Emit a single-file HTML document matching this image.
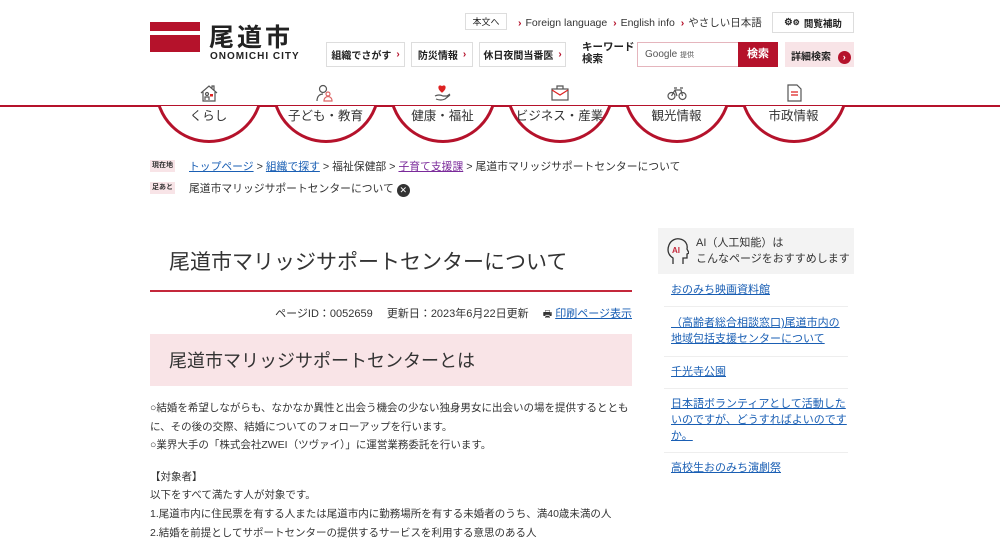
<!DOCTYPE html>
<html><head><meta charset="utf-8"><style>
*{margin:0;padding:0;box-sizing:border-box}
body{width:1000px;height:540px;overflow:hidden;background:#fff;font-family:"Liberation Sans","Noto Sans CJK JP",sans-serif;color:#333;position:relative}
.a{position:absolute;white-space:nowrap}
.btn{position:absolute;border:1px solid #ddd;background:#fff;font-size:10px;font-weight:bold;display:flex;align-items:center;justify-content:center;color:#222}
.chev{color:#b5122b;font-weight:bold;margin-right:4px}
.navline{position:absolute;left:0;top:105px;width:1000px;height:2px;background:#b5122b}
.arcs{position:absolute;left:0;top:106px;width:1000px;height:50px;overflow:hidden}
.circ{position:absolute;width:108px;height:108px;border-radius:50%;border:3px solid #b5122b;background:#fff;top:-71px}
.nl{position:absolute;top:105px;font-size:12.5px;color:#333;width:117px;text-align:center}
.ic{position:absolute;top:84px;width:20px;height:18px}
a,.lk{color:#1a5fb4;text-decoration:underline}
.body p{font-size:10.5px;line-height:18.6px;color:#333}
.side a{position:absolute;left:671px;font-size:11px;line-height:16px;color:#1a5fb4}
.sep{position:absolute;left:664px;width:184px;height:1px;background:#eee}
</style></head><body>
<div class="a" style="left:150px;top:22px;width:50px;height:9px;background:#b5122b"></div>
<div class="a" style="left:150px;top:35px;width:50px;height:17px;background:#b5122b"></div>
<div class="a" style="left:209px;top:18px;font-size:25px;font-weight:bold;letter-spacing:3px;color:#222">尾道市</div>
<div class="a" style="left:210px;top:51px;font-size:10px;font-weight:bold;letter-spacing:1px;color:#222">ONOMICHI CITY</div>
<div class="btn" style="left:465px;top:13px;width:42px;height:17px;font-weight:normal;font-size:9px">本文へ</div>
<div class="a" style="left:518px;top:15px;font-size:10.5px;color:#333"><span class="chev">›</span>Foreign language &nbsp;<span class="chev">›</span>English info &nbsp;<span class="chev">›</span>やさしい日本語</div>
<div class="btn" style="left:772px;top:12px;width:82px;height:21px;font-size:9.5px">⚙<span style="font-size:8px;margin-right:4px">⚙</span>閲覧補助</div>
<div class="btn" style="left:326px;top:42px;width:79px;height:25px">組織でさがす <span class="chev" style="margin:0 0 0 5px">›</span></div>
<div class="btn" style="left:411px;top:42px;width:62px;height:25px">防災情報 <span class="chev" style="margin:0 0 0 5px">›</span></div>
<div class="btn" style="left:479px;top:42px;width:87px;height:25px">休日夜間当番医 <span class="chev" style="margin:0 0 0 5px">›</span></div>
<div class="a" style="left:582px;top:41px;font-size:10.5px;font-weight:bold;line-height:12px;color:#222">キーワード<br>検索</div>
<div class="a" style="left:637px;top:42px;width:102px;height:25px;border:1px solid #e5b5bd;font-size:10px;color:#555;padding:6px 0 0 7px">Google <span style="font-size:7px">提供</span></div>
<div class="a" style="left:738px;top:42px;width:40px;height:25px;background:#b5122b;color:#fff;font-size:11px;font-weight:bold;text-align:center;line-height:25px">検索</div>
<div class="a" style="left:785px;top:42px;width:69px;height:25px;background:#f8e4e7;font-size:10px;font-weight:bold;color:#222;padding:6px 0 0 6px">詳細検索 <span style="display:inline-block;width:13px;height:13px;border-radius:50%;background:#b5122b;color:#fff;font-size:9px;text-align:center;line-height:13px;margin-left:4px">›</span></div>
<div class="navline"></div>
<div class="arcs">
<div class="circ" style="left:155px"></div><div class="circ" style="left:272px"></div><div class="circ" style="left:389px"></div><div class="circ" style="left:506px"></div><div class="circ" style="left:623px"></div><div class="circ" style="left:740px"></div>
</div>
<svg class="ic" style="left:199px" viewBox="0 0 20 18" fill="none" stroke="#555" stroke-width="1.2"><path d="M2 9L10 2l8 7M4 8v9h12V8M13 4V2h2v4"/><circle cx="8" cy="10" r="1.5"/><path d="M6 16v-3h4v3"/><rect x="11" y="10" width="3" height="2.5" fill="#d22" stroke="none"/></svg>
<svg class="ic" style="left:315px" viewBox="0 0 20 18" fill="none" stroke="#555" stroke-width="1.2"><circle cx="8" cy="5" r="3.5"/><path d="M2 17c0-5 3-7 6-7"/><circle cx="13" cy="10" r="2" stroke="#d66"/><path d="M9 17c0-3 2-4.5 4-4.5s4 1.5 4 4.5z" stroke="#d66"/></svg>
<svg class="ic" style="left:432px" viewBox="0 0 20 18" fill="none" stroke="#555" stroke-width="1.2"><path d="M10 8C5 4 7 0 10 3 13 0 15 4 10 8z" fill="#d22" stroke="#d22"/><path d="M3 12q4-2 8 0h4l3-2M4 15q5 2 9 0l5-4"/></svg>
<svg class="ic" style="left:550px" viewBox="0 0 20 18" fill="none" stroke="#555" stroke-width="1.2"><rect x="2" y="5" width="16" height="11"/><path d="M7 5V2h6v3"/><path d="M2 6l8 5 8-5" stroke="#d22"/></svg>
<svg class="ic" style="left:667px" viewBox="0 0 20 18" fill="none" stroke="#555" stroke-width="1.2"><circle cx="4.5" cy="12" r="3.5"/><circle cx="15.5" cy="12" r="3.5"/><path d="M4.5 12L8 6h6l1.5 6M10 12L8 6M7 4h3M13 4h3" /></svg>
<svg class="ic" style="left:784px" viewBox="0 0 20 18" fill="none" stroke="#555" stroke-width="1.2"><path d="M4 1h9l4 4v12H4z"/><path d="M7 8h7M7 11h7" stroke="#d22"/></svg>
<div class="nl" style="left:150px">くらし</div>
<div class="nl" style="left:267px">子ども・教育</div>
<div class="nl" style="left:384px">健康・福祉</div>
<div class="nl" style="left:501px">ビジネス・産業</div>
<div class="nl" style="left:618px">観光情報</div>
<div class="nl" style="left:735px">市政情報</div>
<div class="a" style="left:150px;top:160px;width:25px;height:12px;background:#f8e4e7;font-size:7px;font-weight:bold;text-align:center;line-height:12px">現在地</div>
<div class="a" style="left:189px;top:158px;font-size:10.8px;color:#333"><span class="lk">トップページ</span> &gt; <span class="lk">組織で探す</span> &gt; 福祉保健部 &gt; <span class="lk" style="color:#7a2a9a">子育て支援課</span> &gt; 尾道市マリッジサポートセンターについて</div>
<div class="a" style="left:150px;top:182px;width:25px;height:12px;background:#f8e4e7;font-size:7px;font-weight:bold;text-align:center;line-height:12px">足あと</div>
<div class="a" style="left:189px;top:180px;font-size:10.8px;color:#333">尾道市マリッジサポートセンターについて <span style="display:inline-block;width:13px;height:13px;border-radius:50%;background:#333;color:#fff;font-size:9px;text-align:center;line-height:13px;vertical-align:-1px">✕</span></div>
<div class="a" style="left:169px;top:246px;font-size:21px;color:#333">尾道市マリッジサポートセンターについて</div>
<div class="a" style="left:150px;top:290px;width:482px;height:2px;background:#c4283b"></div>
<div class="a" style="right:368px;top:305px;font-size:11px;color:#333">ページID：0052659　 更新日：2023年6月22日更新　 <span style="font-size:10px">🖶</span> <span class="lk">印刷ページ表示</span></div>
<div class="a" style="left:150px;top:334px;width:482px;height:52px;background:#f9e4e7"></div>
<div class="a" style="left:169px;top:347px;font-size:18px;color:#333">尾道市マリッジサポートセンターとは</div>
<div class="a body" style="left:150px;top:399px">
<p>○結婚を希望しながらも、なかなか異性と出会う機会の少ない独身男女に出会いの場を提供するととも</p>
<p>に、その後の交際、結婚についてのフォローアップを行います。</p>
<p>○業界大手の「株式会社ZWEI（ツヴァイ）」に運営業務委託を行います。</p>
<p style="margin-top:13px">【対象者】</p>
<p>以下をすべて満たす人が対象です。</p>
<p>1.尾道市内に住民票を有する人または尾道市内に勤務場所を有する未婚者のうち、満40歳未満の人</p>
<p>2.結婚を前提としてサポートセンターの提供するサービスを利用する意思のある人</p>
</div>
<div class="a" style="left:658px;top:228px;width:196px;height:46px;background:#f3f3f3"></div>
<svg class="a" style="left:667px;top:237px" width="22" height="28" viewBox="0 0 22 28" fill="none" stroke="#333" stroke-width="1.3"><path d="M6 27v-6C1 18 0 13 2 8 4 3 9 1 13 2c5 1 8 5 7 10l2 4-2 1v4h-4v6"/><text x="5" y="16" font-size="8" font-weight="bold" fill="#c4283b" stroke="none" font-family="Liberation Sans">AI</text></svg>
<div class="a" style="left:696px;top:235px;font-size:11px;line-height:16px;color:#333">AI（人工知能）は<br>こんなページをおすすめします</div>
<div class="side">
<a style="top:282px">おのみち映画資料館</a>
<div class="sep" style="top:306px"></div>
<a style="top:315px">（高齢者総合相談窓口)尾道市内の<br>地域包括支援センターについて</a>
<div class="sep" style="top:356px"></div>
<a style="top:364px">千光寺公園</a>
<div class="sep" style="top:388px"></div>
<a style="top:396px">日本語ボランティアとして活動した<br>いのですが、どうすればよいのです<br>か。</a>
<div class="sep" style="top:452px"></div>
<a style="top:460px">高校生おのみち演劇祭</a>
</div>
</body></html>
